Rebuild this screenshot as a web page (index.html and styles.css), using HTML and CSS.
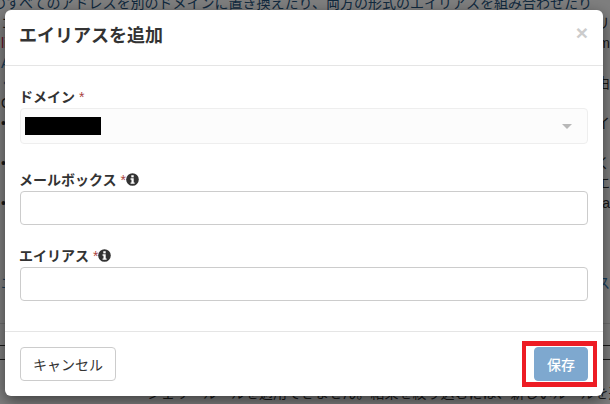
FILE: index.html
```html
<!DOCTYPE html>
<html lang="ja">
  <head>
    <meta charset="UTF-8" />
    <title>エイリアスを追加</title>
    <link rel="stylesheet" href="styles.css">
  </head>
  <body>
    <div class="page">
      <div class="bg-line bg-top">のすべてのアドレスを別のドメインに置き換えたり、両方の形式のエイリアスを組み合わせたり</div>
      <div class="bg-row"><span>コ</span><span>リ</span></div>
      <div class="bg-row"><span class="bg-red">li</span><span>m</span></div>
      <div class="bg-row"><span class="bg-link">A</span><span></span></div>
      <div class="bg-row"><span class="bg-link">く</span><span>由</span></div>
      <div class="bg-row"><span>O</span><span></span></div>
      <div class="bg-row"><span>•</span><span>イ</span></div>
      <div class="bg-row"><span></span><span></span></div>
      <div class="bg-row"><span>•</span><span>く</span></div>
      <div class="bg-row"><span></span><span>エ</span></div>
      <div class="bg-row"><span>•</span><span>a</span></div>
      <div class="bg-gap-lg"></div>
      <div class="bg-row"><span class="bg-link">エ</span><span class="bg-link">ス</span></div>
      <div class="bg-gap"></div>
      <div class="bg-rule"></div>
      <div class="bg-dark"></div>
      <div class="bg-dark bg-dark-second"></div>
      <div class="bg-line bg-bottom">シェリールールを適用できません。結果を絞り込むには、新しいルールを追</div>
    </div>
    <div class="backdrop"></div>

    <div class="modal">
      <div class="modal-header">
        <h4>エイリアスを追加</h4>
        <span class="close">×</span>
      </div>
      <form class="modal-body">
        <div class="form-group form-group-select">
          <label>ドメイン <span class="required">*</span></label>
          <div class="select">
            <span class="redacted"></span>
            <span class="caret"></span>
          </div>
        </div>
        <div class="form-group">
          <label>メールボックス <span class="required">*</span><svg class="info" viewBox="0 0 14 14"><circle cx="7" cy="7" r="6.8" fill="#333"/><rect x="5.7" y="2.4" width="2.6" height="2.3" fill="#fff"/><path d="M4.9 5.7h3.4v4.4h1v1.5H4.9v-1.5h1V7.2h-1z" fill="#fff"/></svg></label>
          <input type="text" />
        </div>
        <div class="form-group">
          <label>エイリアス <span class="required">*</span><svg class="info" viewBox="0 0 14 14"><circle cx="7" cy="7" r="6.8" fill="#333"/><rect x="5.7" y="2.4" width="2.6" height="2.3" fill="#fff"/><path d="M4.9 5.7h3.4v4.4h1v1.5H4.9v-1.5h1V7.2h-1z" fill="#fff"/></svg></label>
          <input type="text" />
        </div>
      </form>
      <div class="modal-footer">
        <button type="button" class="btn">キャンセル</button>
        <button type="button" class="btn btn-primary">保存</button>
      </div>
      <div class="highlight"></div>
    </div>
  </body>
</html>
```

FILE: styles.css
```css
html,
body {
  margin: 0;
  height: 100%;
  overflow: hidden;
}
body {
  background-color: #fff;
  color: #333;
  font-family: "Liberation Sans", "Noto Sans CJK JP", sans-serif;
  font-size: 14px;
}
.page {
  margin-top: -7px;
  height: 411px;
  overflow: hidden;
  font-size: 14px;
  line-height: 20px;
}
.bg-row {
  display: flex;
  justify-content: space-between;
  height: 20px;
  padding: 0 0 0 1px;
  white-space: nowrap;
}
.bg-line {
  height: 20px;
  white-space: nowrap;
}
.bg-top {
  color: #23527c;
  margin-left: -8px;
}
.bg-bottom {
  margin-left: 147px;
  margin-top: 23px;
}
.bg-link {
  color: #337ab7;
}
.bg-red {
  color: #c7254e;
}
.bg-gap-lg {
  height: 60px;
}
.bg-gap {
  height: 30px;
}
.bg-rule {
  height: 1px;
  background-color: #ddd;
}
.bg-dark {
  height: 1px;
  margin-top: 21px;
  background-color: #333;
}
.bg-dark-second {
  margin-top: 13px;
}
.backdrop {
  position: absolute;
  top: 0;
  left: 0;
  right: 0;
  bottom: 0;
  background-color: rgba(0, 0, 0, 0.5);
}
.modal {
  position: absolute;
  top: 10px;
  left: 5px;
  width: 598px;
  height: 386px;
  display: flex;
  flex-direction: column;
  background-color: #fff;
  border-radius: 6px;
  box-shadow: 0 5px 15px rgba(0, 0, 0, 0.5);
}
.modal-header {
  display: flex;
  justify-content: space-between;
  height: 55px;
  padding: 0 15px;
  border-bottom: 1px solid #e5e5e5;
}
.modal-header h4 {
  margin: 13px 0 0 -1px;
  font-size: 18px;
  line-height: 26px;
  font-weight: bold;
}
.close {
  color: #ccc;
  font-family: "Liberation Sans", sans-serif;
  font-size: 21px;
  font-weight: bold;
  line-height: 21px;
  margin: 12px 0 0 0;
}
.modal-body {
  flex: 1;
  padding: 0 15px;
}
.form-group {
  margin-bottom: 21px;
}
.form-group-select {
  margin-top: 21px;
  margin-bottom: 26px;
}
label {
  display: block;
  height: 21px;
  margin-left: -1px;
  font-weight: bold;
  line-height: 21px;
}
.required {
  color: #a94442;
  font-weight: normal;
}
.info {
  width: 13px;
  height: 13px;
  vertical-align: -1px;
}
.select {
  display: flex;
  justify-content: space-between;
  align-items: center;
  height: 34px;
  padding: 0 15px 0 4px;
  background-color: #fcfcfc;
  border: 1px solid #eee;
  border-radius: 4px;
}
.redacted {
  width: 76px;
  height: 18px;
  background-color: #000;
}
.caret {
  border-top: 5px solid #b8b8b8;
  border-left: 5px solid transparent;
  border-right: 5px solid transparent;
}
input {
  display: block;
  width: 100%;
  height: 34px;
  padding: 6px 12px;
  border: 1px solid #ccc;
  border-radius: 4px;
  box-sizing: border-box;
}
.modal-footer {
  display: flex;
  justify-content: space-between;
  height: 49px;
  padding: 15px 15px 0;
  border-top: 1px solid #e5e5e5;
}
.btn {
  height: 34px;
  padding: 0 12px;
  background-color: #fff;
  color: #333;
  border: 1px solid #ccc;
  border-radius: 4px;
  font-family: inherit;
  font-size: 14px;
}
.btn-primary {
  width: 54px;
  background-color: #7ea8cf;
  border-color: #7ea8cf;
  color: #fff;
  font-weight: 500;
}
.highlight {
  position: absolute;
  top: 331px;
  left: 517px;
  width: 67px;
  height: 36px;
  border-style: solid;
  border-color: #ed1c24;
  border-width: 5px 4px;
}
```
